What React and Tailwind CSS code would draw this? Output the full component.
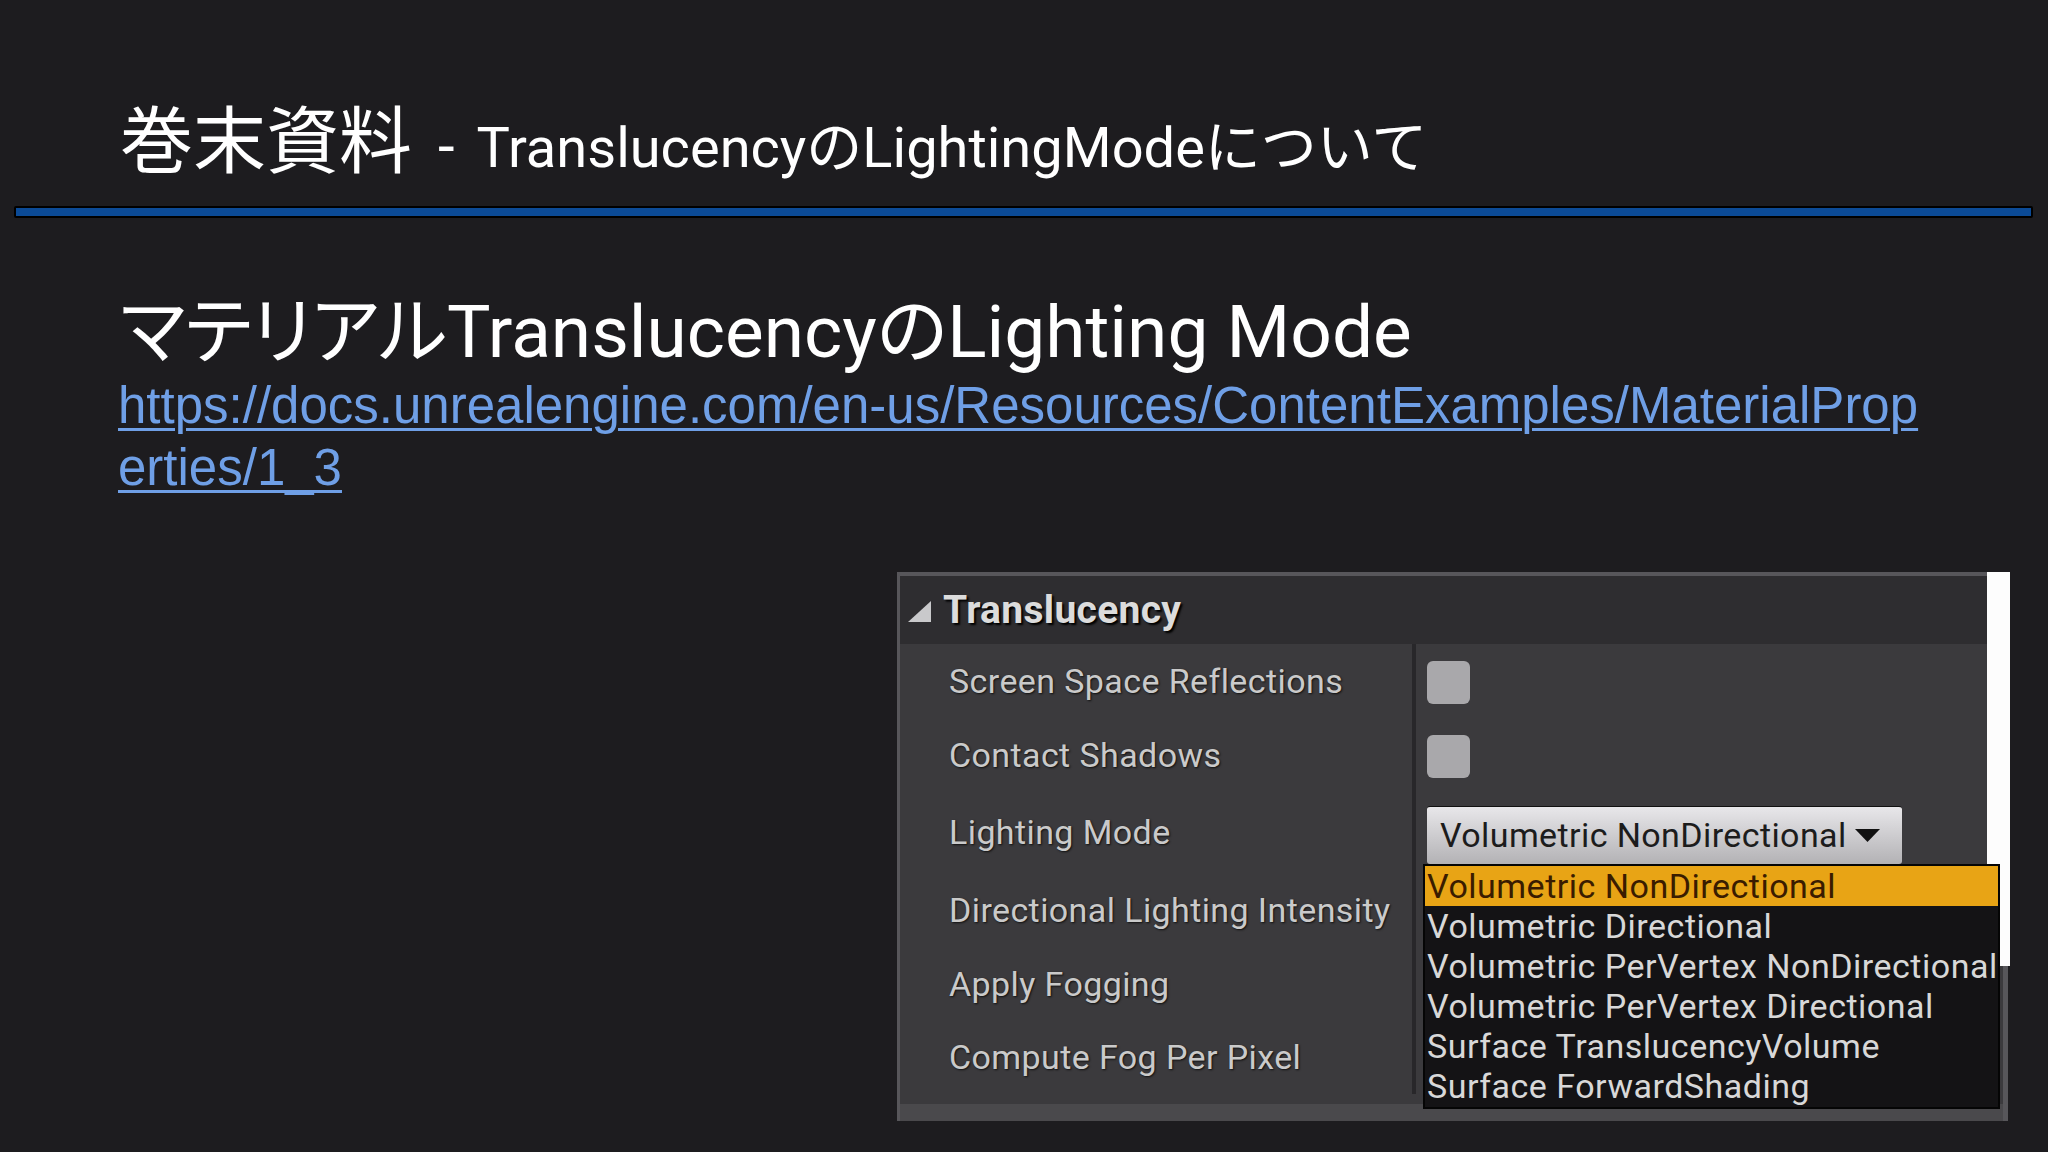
import { useState } from 'react';

const labels = [
    { text: 'Screen Space Reflections', h: 'h-[76px]' },
    { text: 'Contact Shadows', h: 'h-[72px]' },
    { text: 'Lighting Mode', h: 'h-[82px]' },
    { text: 'Directional Lighting Intensity', h: 'h-[74px]' },
    { text: 'Apply Fogging', h: 'h-[74px]' },
    { text: 'Compute Fog Per Pixel', h: 'h-[72px]' },
];

const options = [
    'Volumetric NonDirectional',
    'Volumetric Directional',
    'Volumetric PerVertex NonDirectional',
    'Volumetric PerVertex Directional',
    'Surface TranslucencyVolume',
    'Surface ForwardShading',
];

const Checkbox = () => <div className="w-[43px] h-[43px] rounded-[6px] bg-[#a9a8ab]" />;

const DetailsPanel = () => {
    const [selected] = useState(0);

    return (
        <div className="relative ml-[897px] w-[1111px] h-[549px] bg-[#3b3a3d] border-l-[3px] border-r-[5px] border-t-[4px] border-[#57565a] flex flex-col font-['Roboto',sans-serif]">
            <div className="h-[68px] shrink-0 bg-[#2e2d30] flex items-center pl-[8px] gap-[12px]">
                <svg width="23" height="21" viewBox="0 0 23 21" className="mt-[2px]">
                    <polygon points="23,0 23,21 0,21" fill="#c9c9cb" />
                </svg>
                <span className="text-[39px] font-bold text-[#dcdcdc] tracking-[0.3px] [text-shadow:2px_2px_2px_#000]">Translucency</span>
            </div>

            <div className="flex flex-1">
                <div className="w-[512px] shrink-0 flex flex-col">
                    {labels.map((label) => (
                        <div key={label.text} className={`${label.h} flex items-center pl-[49px] pb-[1px] text-[34px] tracking-[0.4px] text-[#cacaca] [text-shadow:1px_1px_2px_#111]`}>
                            {label.text}
                        </div>
                    ))}
                </div>
                <div className="w-[4px] h-[450px] bg-[#28272a]" />
                <div className="flex flex-col pl-[11px]">
                    <div className="h-[76px] flex items-center"><Checkbox /></div>
                    <div className="h-[72px] flex items-center"><Checkbox /></div>
                    <div className="h-[82px] flex items-center">
                        <div className="w-[475px] h-[58px] mt-[4px] rounded-[3px] bg-gradient-to-b from-[#e8e7ea] to-[#b3b2b5] border-t border-[#111] flex items-center pl-[13px] pr-[22px] justify-between">
                            <span className="text-[34px] text-[#1c1c1c] tracking-[0.4px]">{options[selected]}</span>
                            <svg width="25" height="13" viewBox="0 0 25 13">
                                <polygon points="0,0 25,0 12.5,13" fill="#111" />
                            </svg>
                        </div>
                    </div>
                </div>
            </div>

            <div className="h-[27px] shrink-0 flex flex-col">
                <div className="h-[10px] bg-[#3b3a3d]" />
                <div className="flex-1 bg-[#4a494c]" />
            </div>

            {/* white strip on the right edge of the capture */}
            <div className="absolute -top-[4px] left-[1087px] w-[23px] h-[394px] bg-[#fdfdfd]" />

            {/* open combo list */}
            <div className="absolute left-[523px] top-[288px] w-[577px] h-[245px] bg-[#141315] border-2 border-[#050505] flex flex-col">
                {options.map((opt, i) => (
                    <div
                        key={opt}
                        className={`h-[40px] shrink-0 flex items-center pl-[2px] text-[34px] leading-none tracking-[0.5px] whitespace-nowrap ${i === selected ? 'bg-[#e8a415] text-[#3a1c00]' : 'text-[#d8d8d8]'}`}
                    >
                        {opt}
                    </div>
                ))}
            </div>
        </div>
    );
};

export default function App() {
    return (
        <div className="w-[2048px] h-[1152px] bg-[#1d1c1f] overflow-hidden flex flex-col font-['Roboto','Noto_Sans_CJK_JP',sans-serif]">
            <h1 className="pl-[120px] pt-[99px] h-[206px] flex items-baseline text-white font-normal leading-none">
                <span className="text-[73px] font-['Noto_Sans_CJK_JP',sans-serif]">巻末資料</span>
                <span className="text-[60px] ml-[26px] mr-[22px]">-</span>
                <span className="text-[56px]">TranslucencyのLightingModeについて</span>
            </h1>

            <div className="ml-[14px] w-[2019px] h-[12px] bg-[#0b4a96] border-2 border-black rounded-[2px]" />

            <h2 className="pl-[120px] mt-[78px] text-[73px] leading-none text-white font-normal [font-feature-settings:'palt']">
                マテリアルTranslucencyのLighting Mode
            </h2>

            <a href="#" className="ml-[118px] mt-[6px] w-fit font-['Liberation_Sans',sans-serif] text-[51px] leading-[62px] text-[#6f9fe6] underline decoration-[3px] underline-offset-[5px]">
                https://docs.unrealengine.com/en-us/Resources/ContentExamples/MaterialProp
                <br />
                erties/1_3
            </a>

            <div className="mt-[73px]">
                <DetailsPanel />
            </div>
        </div>
    );
}
